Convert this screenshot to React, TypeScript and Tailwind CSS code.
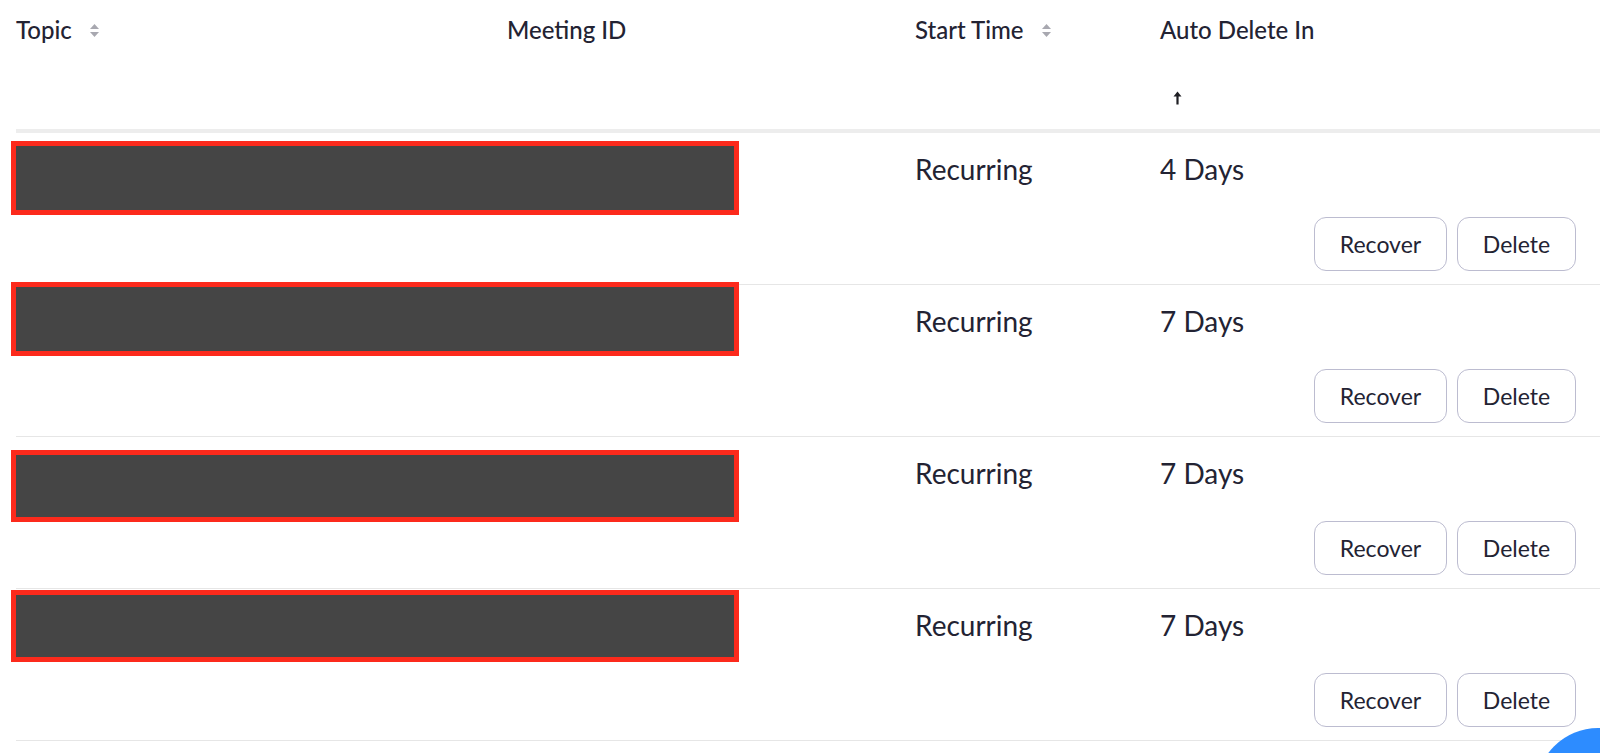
import React from 'react';

const ROWS = [
  { days: '4 Days', boxTop: 'mt-[8px]', boxH: 'h-[74px]' },
  { days: '7 Days', boxTop: 'mt-[-3px]', boxH: 'h-[74px]' },
  { days: '7 Days', boxTop: 'mt-[13px]', boxH: 'h-[72px]' },
  { days: '7 Days', boxTop: 'mt-[1px]', boxH: 'h-[72px]' },
];

function SortIcon() {
  return (
    <svg width="11" height="15" viewBox="0 0 11 15" className="ml-[17px] inline-block">
      <path d="M5.5 1 L10 6 L1 6 Z" fill="#a8a8b0" />
      <path d="M5.5 14 L10 9 L1 9 Z" fill="#a8a8b0" />
    </svg>
  );
}

function UpArrow() {
  return (
    <svg width="9" height="14" viewBox="0 0 9 14">
      <path d="M4.5 0.5 L8.5 5.5 L5.6 5.5 L5.6 13.5 L3.4 13.5 L3.4 5.5 L0.5 5.5 Z" fill="#1f1f24" />
    </svg>
  );
}

function Button({ label, width }: { label: string; width: string }) {
  return (
    <button
      className={`${width} h-[54px] rounded-[12px] border-[1.5px] border-[#bcbcd0] bg-white text-[23px] text-[#232333] flex items-center justify-center`}
    >
      {label}
    </button>
  );
}

export default function App() {
  return (
    <div
      className="w-[1600px] h-[753px] overflow-hidden bg-white text-[#232333] relative"
      style={{ fontFamily: 'Lato, "Open Sans", sans-serif' }}
    >
      <div className="pl-[16px]">
        {/* header */}
        <div className="h-[133px] border-b-[4px] border-[#ededed] grid grid-cols-[491px_408px_245px_1fr] items-start pt-[16px] text-[24px] font-medium leading-[28px]">
          <div className="flex items-center">
            Topic
            <SortIcon />
          </div>
          <div>Meeting ID</div>
          <div className="flex items-center">
            Start Time
            <SortIcon />
          </div>
          <div>
            <div>Auto Delete In</div>
            <div className="ml-[13px] mt-[47px] leading-none">
              <UpArrow />
            </div>
          </div>
        </div>

        {/* rows */}
        {ROWS.map((r, i) => (
          <div key={i} className="h-[152px] border-b border-[#e6e6e6] flex flex-col">
            <div className="h-[84px] grid grid-cols-[899px_245px_1fr] items-start">
              <div className={`${r.boxTop} ${r.boxH} ml-[-5px] w-[728px] border-[5px] border-[#fc2a1c] bg-[#454545]`} />
              <div className="pt-[18px] text-[28px] leading-[36px]">Recurring</div>
              <div className="pt-[18px] text-[28px] leading-[36px]">{r.days}</div>
            </div>
            <div className="flex justify-end gap-[10px] pr-[24px]">
              <Button label="Recover" width="w-[133px]" />
              <Button label="Delete" width="w-[119px]" />
            </div>
          </div>
        ))}
      </div>

      {/* floating help bubble */}
      <div className="absolute left-[1536px] top-[728px] w-[124px] h-[124px] rounded-full bg-[#2d8cff]" />
    </div>
  );
}
